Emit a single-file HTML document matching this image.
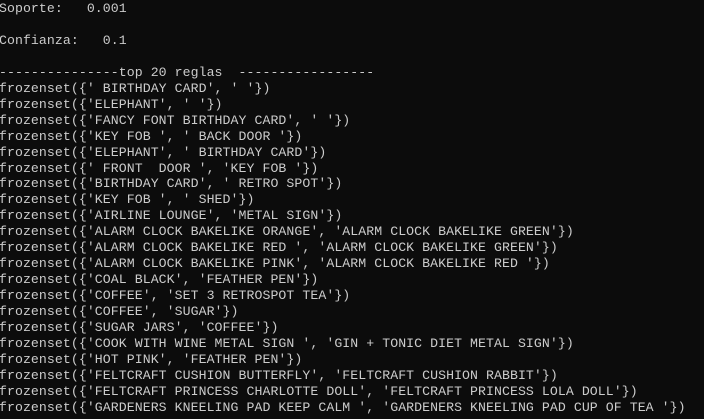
<!DOCTYPE html>
<html><head><style>
html,body{margin:0;padding:0;background:#0c0c0c;width:704px;height:419px;overflow:hidden}
pre{margin:0;position:absolute;left:-1px;top:1px;font-family:"Liberation Mono",monospace;font-size:13.2px;line-height:15.95px;color:#cccccc;letter-spacing:0.07px}
</style></head><body><pre>Soporte:   0.001

Confianza:   0.1

---------------top 20 reglas  -----------------
frozenset({' BIRTHDAY CARD', ' '})
frozenset({'ELEPHANT', ' '})
frozenset({'FANCY FONT BIRTHDAY CARD', ' '})
frozenset({'KEY FOB ', ' BACK DOOR '})
frozenset({'ELEPHANT', ' BIRTHDAY CARD'})
frozenset({' FRONT  DOOR ', 'KEY FOB '})
frozenset({'BIRTHDAY CARD', ' RETRO SPOT'})
frozenset({'KEY FOB ', ' SHED'})
frozenset({'AIRLINE LOUNGE', 'METAL SIGN'})
frozenset({'ALARM CLOCK BAKELIKE ORANGE', 'ALARM CLOCK BAKELIKE GREEN'})
frozenset({'ALARM CLOCK BAKELIKE RED ', 'ALARM CLOCK BAKELIKE GREEN'})
frozenset({'ALARM CLOCK BAKELIKE PINK', 'ALARM CLOCK BAKELIKE RED '})
frozenset({'COAL BLACK', 'FEATHER PEN'})
frozenset({'COFFEE', 'SET 3 RETROSPOT TEA'})
frozenset({'COFFEE', 'SUGAR'})
frozenset({'SUGAR JARS', 'COFFEE'})
frozenset({'COOK WITH WINE METAL SIGN ', 'GIN + TONIC DIET METAL SIGN'})
frozenset({'HOT PINK', 'FEATHER PEN'})
frozenset({'FELTCRAFT CUSHION BUTTERFLY', 'FELTCRAFT CUSHION RABBIT'})
frozenset({'FELTCRAFT PRINCESS CHARLOTTE DOLL', 'FELTCRAFT PRINCESS LOLA DOLL'})
frozenset({'GARDENERS KNEELING PAD KEEP CALM ', 'GARDENERS KNEELING PAD CUP OF TEA '})
</pre></body></html>
